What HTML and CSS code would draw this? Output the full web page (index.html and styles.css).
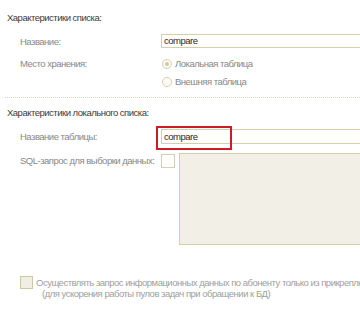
FILE: index.html
```html
<!DOCTYPE html>
<html lang="ru">
<head>
    <meta charset="UTF-8">
    <title>Характеристики списка</title>
    <link rel="stylesheet" href="styles.css">
</head>
<body>
    <div class="page">
        <div class="group-title first">Характеристики списка:</div>

        <div class="row row-name">
            <div class="label">Название:</div>
            <div class="field"><div class="input">compare</div></div>
        </div>

        <div class="row row-storage">
            <div class="label">Место хранения:</div>
            <div class="field radios">
                <div class="radio-item"><span class="radio checked"></span>Локальная таблица</div>
                <div class="radio-item"><span class="radio"></span>Внешняя таблица</div>
            </div>
        </div>

        <div class="divider"></div>

        <div class="group-title">Характеристики локального списка:</div>

        <div class="row row-table">
            <div class="label">Название таблицы:</div>
            <div class="field">
                <div class="input tall">compare</div>
                <div class="highlight"></div>
            </div>
        </div>

        <div class="row row-sql">
            <div class="label">SQL-запрос для выборки данных:</div>
            <div class="field sql">
                <span class="checkbox"></span>
                <div class="textarea"></div>
            </div>
        </div>

        <div class="bottom-check">
            <span class="checkbox"></span>
            <div class="bottom-text">
                <div>Осуществлять запрос информационных данных по абоненту только из прикреплен</div>
                <div class="indent">(для ускорения работы пулов задач при обращении к БД)</div>
            </div>
        </div>
    </div>
</body>
</html>
```

FILE: styles.css
```css
html, body {
    margin: 0;
    padding: 0;
    background: #fff;
    overflow: hidden;
}

.page {
    width: 360px;
    height: 312px;
    overflow: hidden;
    font-family: "Liberation Sans", Arial, sans-serif;
    font-size: 9.5px;
    letter-spacing: -0.5px;
    color: #888;
}

.group-title {
    color: #3c3c3c;
    line-height: 14px;
    padding-left: 7px;
    margin-top: 8px;
}

.group-title.first {
    margin-top: 11px;
}

.row {
    display: flex;
    white-space: nowrap;
}

.label {
    width: 141px;
    padding-left: 20px;
    flex-shrink: 0;
}

.field {
    position: relative;
    flex: 1;
}

.row-name {
    margin-top: 9px;
    align-items: center;
}

.input {
    width: 260px;
    height: 12px;
    line-height: 12px;
    border: 1px solid #d3ceae;
    border-right: none;
    background: #fffffb;
    color: #2a2a2a;
    padding-left: 2px;
}

.input.tall {
    height: 13px;
    line-height: 13px;
}

.row-storage {
    margin-top: 7px;
    line-height: 18px;
}

.radio-item {
    display: flex;
    align-items: center;
    height: 18px;
}

.radio {
    display: inline-block;
    box-sizing: border-box;
    width: 10px;
    height: 10px;
    margin: 0 3px 0 1px;
    border: 1px solid #d6d1b6;
    border-radius: 50%;
    background: #fcfbf4;
    position: relative;
}

.radio.checked::after {
    content: "";
    position: absolute;
    left: 2px;
    top: 2px;
    width: 4px;
    height: 4px;
    border-radius: 50%;
    background: #d2ca8e;
}

.divider {
    margin: 6px 0 0 5px;
    border-top: 1px dotted #d8d4c0;
}

.row-table {
    margin-top: 9px;
    align-items: center;
}

.highlight {
    position: absolute;
    left: -5px;
    top: -3px;
    width: 72px;
    height: 20px;
    border: 2px solid #cc1d25;
}

.row-sql {
    margin-top: 9px;
}

.row-sql .label {
    line-height: 14px;
    padding-top: 1px;
}

.sql {
    display: flex;
    align-items: flex-start;
}

.checkbox {
    display: inline-block;
    box-sizing: border-box;
    width: 14px;
    height: 14px;
    border: 1px solid #d4cfb0;
    background: #fff;
    flex-shrink: 0;
}

.sql .checkbox {
    margin-top: 1px;
}

.textarea {
    margin-left: 4px;
    width: 200px;
    height: 90px;
    border: 1px solid #d4cfa8;
    border-right: none;
    background: #f1efe6;
}

.bottom-check {
    display: flex;
    align-items: flex-start;
    margin: 31px 0 0 20px;
    white-space: nowrap;
}

.bottom-check .checkbox {
    width: 13px;
    height: 13px;
    background: #f1efe4;
    border-color: #cdc8a4;
}

.bottom-text {
    margin: 1px 0 0 3px;
    line-height: 11px;
    color: #a0a0a0;
}

.bottom-text .indent {
    padding-left: 6px;
}
```
